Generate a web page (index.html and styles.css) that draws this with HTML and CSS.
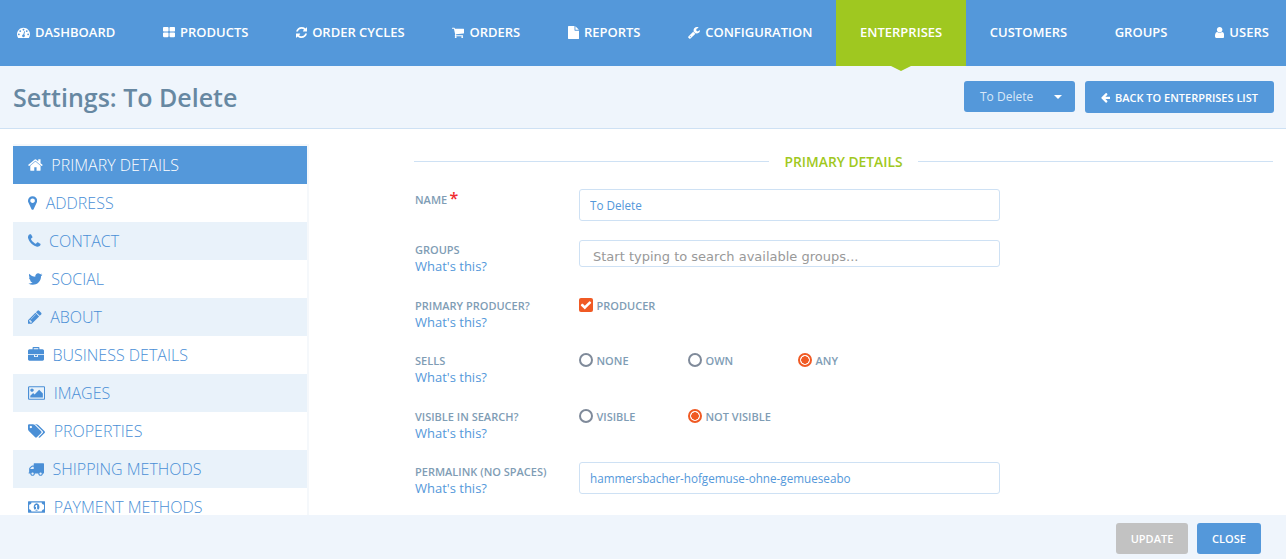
FILE: index.html
```html
<!DOCTYPE html>
<html lang="en">
<head>
    <meta charset="UTF-8">
    <meta name="viewport" content="width=device-width, initial-scale=1.0">
    <title>Settings: To Delete</title>
    <link rel="stylesheet" href="styles.css">
</head>
<body>
    <!-- Icon sprite, each icon sets its own viewBox so it keeps its natural width -->
    <svg class="sprite" xmlns="http://www.w3.org/2000/svg">
        <defs>
            <path id="i-dashboard" d="M384 1152q0-53-37.500-90.500t-90.500-37.500-90.500 37.500-37.500 90.500 37.500 90.500 90.500 37.500 90.500-37.500 37.500-90.500zm192-448q0-53-37.500-90.500t-90.500-37.500-90.500 37.500-37.500 90.500 37.500 90.500 90.500 37.500 90.500-37.500 37.500-90.500zm428 481l101-382q6-26-7.500-48.500t-38.500-29.500-48 6.500-30 39.500l-101 382q-60 5-107 43.500t-63 98.500q-20 77 20 146t117 89 146-20 89-117q16-60-6-117t-72-91zm660-33q0-53-37.500-90.500t-90.500-37.500-90.500 37.500-37.500 90.500 37.500 90.500 90.500 37.500 90.500-37.500 37.500-90.500zm-640-640q0-53-37.500-90.500t-90.500-37.500-90.500 37.500-37.500 90.500 37.500 90.500 90.500 37.500 90.500-37.500 37.500-90.500zm448 192q0-53-37.500-90.500t-90.500-37.500-90.500 37.500-37.500 90.500 37.500 90.500 90.500 37.500 90.500-37.500 37.500-90.500zm320 448q0 261-141 483-19 29-54 29h-1402q-35 0-54-29-141-221-141-483 0-182 71-348t191-286 286-191 348-71 348 71 286 191 191 286 71 348z"/>
            <path id="i-grid" d="M832 1024v384q0 52-38 90t-90 38h-512q-52 0-90-38t-38-90v-384q0-52 38-90t90-38h512q52 0 90 38t38 90zm0-768v384q0 52-38 90t-90 38h-512q-52 0-90-38t-38-90v-384q0-52 38-90t90-38h512q52 0 90 38t38 90zm896 768v384q0 52-38 90t-90 38h-512q-52 0-90-38t-38-90v-384q0-52 38-90t90-38h512q52 0 90 38t38 90zm0-768v384q0 52-38 90t-90 38h-512q-52 0-90-38t-38-90v-384q0-52 38-90t90-38h512q52 0 90 38t38 90z"/>
            <path id="i-refresh" d="M1639 1056q0 5-1 7-64 268-268 434.500t-478 166.500q-146 0-282.500-55t-243.500-157l-129 129q-19 19-45 19t-45-19-19-45v-448q0-26 19-45t45-19h448q26 0 45 19t19 45-19 45l-137 137q71 66 161 102t187 36q134 0 250-65t186-179q11-17 53-117 8-23 30-23h192q13 0 22.500 9.500t9.500 22.500zm25-800v448q0 26-19 45t-45 19h-448q-26 0-45-19t-19-45 19-45l138-138q-148-137-349-137-134 0-250 65t-186 179q-11 17-53 117-8 23-30 23h-199q-13 0-22.500-9.500t-9.500-22.500v-7q65-268 270-434.500t480-166.500q146 0 284 55.500t245 156.500l130-129q19-19 45-19t45 19 19 45z"/>
            <path id="i-cart" d="M704 1536q0 52-38 90t-90 38-90-38-38-90 38-90 90-38 90 38 38 90zm896 0q0 52-38 90t-90 38-90-38-38-90 38-90 90-38 90 38 38 90zm128-1088v512q0 24-16.500 42.500t-40.500 21.500l-1044 122q13 60 13 70 0 16-24 64h920q26 0 45 19t19 45-19 45-45 19h-1024q-26 0-45-19t-19-45q0-11 8-31.500t16-36 21.500-40 15.500-29.500l-177-823h-204q-26 0-45-19t-19-45 19-45 45-19h256q16 0 28.500 6.500t19.500 15.500 13 24.500 8 26 5.500 29.500 4.500 26h1201q26 0 45 19t19 45z"/>
            <path id="i-file" d="M1152 512v-472q22 14 36 28l408 408q14 14 28 36h-472zm-128 32q0 40 28 68t68 28h544v1056q0 40-28 68t-68 28h-1344q-40 0-68-28t-28-68v-1600q0-40 28-68t68-28h800v544z"/>
            <path id="i-wrench" d="M448 1472q0-26-19-45t-45-19-45 19-19 45 19 45 45 19 45-19 19-45zm644-420l-682 682q-37 37-90 37-52 0-91-37l-106-108q-38-36-38-90 0-53 38-91l681-681q39 98 114.500 173.500t173.500 114.500zm634-435q0 39-23 106-47 134-164.500 217.500t-258.500 83.500q-185 0-316.500-131.500t-131.500-316.500 131.500-316.500 316.500-131.500q58 0 121.500 16.500t107.500 46.500q16 11 16 28t-16 28l-293 169v224l193 107q5-3 79-48.500t135.500-81 70.500-35.500q15 0 23.500 10t8.500 25z"/>
            <path id="i-user" d="M1536 1399q0 109-62.500 187t-150.500 78h-854q-88 0-150.500-78t-62.500-187q0-85 8.500-160.500t31.500-152 58.500-131 94-89 134.500-34.500q131 128 313 128t313-128q76 0 134.500 34.500t94 89 58.500 131 31.500 152 8.500 160.500zm-256-887q0 159-112.500 271.500t-271.500 112.500-271.500-112.500-112.500-271.500 112.500-271.500 271.500-112.500 271.500 112.500 112.500 271.500z"/>
            <path id="i-arrow-left" d="M1664 896v128q0 53-32.500 90.500t-84.500 37.500h-704l293 294q38 36 38 90t-38 90l-75 76q-37 37-90 37-52 0-91-37l-651-652q-37-37-37-90 0-52 37-91l651-650q38-38 91-38 52 0 90 38l75 74q38 38 38 91t-38 91l-293 293h704q52 0 84.500 37.500t32.500 90.500z"/>
            <path id="i-home" d="M1472 992v480q0 26-19 45t-45 19h-384v-384h-256v384h-384q-26 0-45-19t-19-45v-480q0-1 .5-3t.5-3l575-474 575 474q1 2 1 6zm223-69l-62 74q-8 9-21 11h-3q-13 0-21-7l-692-577-692 577q-12 8-24 7-13-2-21-11l-62-74q-8-10-7-23.500t11-21.500l719-599q32-26 76-26t76 26l244 204v-195q0-14 9-23t23-9h192q14 0 23 9t9 23v408l219 182q10 8 11 21.500t-7 23.500z"/>
            <path id="i-marker" d="M1152 640q0-106-75-181t-181-75-181 75-75 181 75 181 181 75 181-75 75-181zm256 0q0 109-33 179l-364 774q-16 33-47.500 52t-67.500 19-67.500-19-46.500-52l-365-774q-33-70-33-179 0-212 150-362t362-150 362 150 150 362z"/>
            <path id="i-phone" d="M1600 1240q0 27-10 70.500t-21 68.500q-21 50-122 106-94 51-186 51-27 0-53-3.500t-57.500-12.500-47-14.500-55.500-20.500-49-18q-98-35-175-83-127-79-264-216t-216-264q-48-77-83-175-3-9-18-49t-20.500-55.500-14.500-47-12.500-57.500-3.500-53q0-92 51-186 56-101 106-122 25-11 68.500-21t70.500-10q14 0 21 3 18 6 53 76 11 19 30 54t35 63.500 31 53.500q3 4 17.500 25t21.500 35.500 7 28.500q0 20-28.500 50t-62 55-62 53-28.500 46q0 9 5 22.500t8.500 20.500 14 24 11.500 19q76 137 174 235t235 174q2 1 19 11.500t24 14 20.500 8.500 22.500 5q18 0 46-28.500t53-62 55-62 50-28.500q14 0 28.500 7t35.500 21.500 25 17.500q25 15 53.500 31t63.500 35 54 30q70 35 76 53 3 7 3 21z"/>
            <path id="i-twitter" d="M1684 408q-67 98-162 167 1 14 1 42 0 130-38 259.500t-115.500 248.500-184.500 210.500-258 146-323 54.500q-271 0-496-145 35 4 78 4 225 0 401-138-105-2-188-64.500t-114-159.500q33 5 61 5 43 0 85-11-112-23-185.500-111.500t-73.500-205.500v-4q68 38 146 41-66-44-105-115t-39-154q0-88 44-163 121 149 294.500 238.500t371.500 99.500q-8-38-8-74 0-134 94.500-228.500t228.500-94.500q140 0 236 102 109-21 205-78-37 115-142 178 92-10 184-50z"/>
            <path id="i-pencil" d="M491 1536l91-91-235-235-91 91v107h128v128h107zm523-928q0-22-22-22-10 0-17 7l-542 542q-7 7-7 17 0 22 22 22 10 0 17-7l542-542q7-7 7-17zm-54-192l416 416-832 832h-416v-416zm683 96q0 53-37 90l-166 166-416-416 166-165q36-38 90-38 53 0 91 38l235 234q37 39 37 91z"/>
            <path id="i-briefcase" d="M640 256h512v-128h-512v128zm1152 640v480q0 66-47 113t-113 47h-1472q-66 0-113-47t-47-113v-480h672v160q0 26 19 45t45 19h320q26 0 45-19t19-45v-160h672zm-768 0v128h-256v-128h256zm768-480v384h-1792v-384q0-66 47-113t113-47h352v-160q0-40 28-68t68-28h576q40 0 68 28t28 68v160h352q66 0 113 47t47 113z"/>
            <path id="i-picture" d="M576 576q0 80-56 136t-136 56-136-56-56-136 56-136 136-56 136 56 56 136zm1024 384v448h-1408v-192l320-320 160 160 512-512zm96-704h-1600q-13 0-22.500 9.500t-9.500 22.500v1216q0 13 9.500 22.500t22.500 9.500h1600q13 0 22.500-9.500t9.500-22.500v-1216q0-13-9.500-22.500t-22.500-9.500zm160 32v1216q0 66-47 113t-113 47h-1600q-66 0-113-47t-47-113v-1216q0-66 47-113t113-47h1600q66 0 113 47t47 113z"/>
            <path id="i-tags" d="M448 448q0-53-37.500-90.500t-90.500-37.500-90.500 37.500-37.500 90.500 37.500 90.500 90.500 37.500 90.500-37.500 37.500-90.500zm1067 576q0 53-37 90l-491 492q-39 37-91 37-53 0-90-37l-715-716q-38-37-64.500-101t-26.500-117v-416q0-52 38-90t90-38h416q53 0 117 26.500t102 64.500l715 714q37 39 37 91zm384 0q0 53-37 90l-491 492q-39 37-91 37-36 0-59-14t-53-45l470-470q37-37 37-90 0-52-37-91l-715-714q-38-38-102-64.500t-117-26.500h224q53 0 117 26.500t102 64.500l715 714q37 39 37 91z"/>
            <path id="i-truck" d="M640 1408q0-52-38-90t-90-38-90 38-38 90 38 90 90 38 90-38 38-90zm-384-512h384v-256h-158q-13 0-22 9l-195 195q-9 9-9 22v30zm1280 512q0-52-38-90t-90-38-90 38-38 90 38 90 90 38 90-38 38-90zm256-1088v1024q0 15-4 26.500t-13.500 18.500-16.500 11.500-23.500 6-22.500 2-25.500 0-22.500-.5q0 106-75 181t-181 75-181-75-75-181h-384q0 106-75 181t-181 75-181-75-75-181h-64q-3 0-22.500.5t-25.500 0-22.500-2-23.500-6-16.500-11.500-13.500-18.500-4-26.500q0-26 19-45t45-19v-320q0-8-.5-35t0-38 2.500-34.500 6.500-37 14-30.500 22.500-30l198-198q19-19 50.500-32t58.500-13h160v-192q0-26 19-45t45-19h1024q26 0 45 19t19 45z"/>
            <path id="i-money" d="M832 1216h384v-96h-128v-448h-114l-148 137 77 80q42-37 55-57h2v288h-128v96zm512-320q0 70-21 142t-59.500 134-101.500 101-138 39-138-39-101.500-101-59.500-134-21-142 21-142 59.500-134 101.500-101 138-39 138 39 101.500 101 59.500 134 21 142zm512 256v-512q-106 0-181-75t-75-181h-1152q0 106-75 181t-181 75v512q106 0 181 75t75 181h1152q0-106 75-181t181-75zm128-832v1152q0 26-19 45t-45 19h-1792q-26 0-45-19t-19-45v-1152q0-26 19-45t45-19h1792q26 0 45 19t19 45z"/>
            <path id="i-check" d="M1671 566q0 40-28 68l-724 724-136 136q-28 28-68 28t-68-28l-136-136-362-362q-28-28-28-68t28-68l136-136q28-28 68-28t68 28l294 295 656-657q28-28 68-28t68 28l136 136q28 28 28 68z"/>
        </defs>
    </svg>

    <nav class="top-nav">
        <a class="nav-item"><svg class="icon" viewBox="0 0 1792 1792"><use href="#i-dashboard"/></svg>Dashboard</a>
        <a class="nav-item"><svg class="icon" viewBox="64 0 1664 1792"><use href="#i-grid"/></svg>Products</a>
        <a class="nav-item"><svg class="icon" viewBox="128 0 1536 1792"><use href="#i-refresh"/></svg>Order Cycles</a>
        <a class="nav-item"><svg class="icon" viewBox="64 0 1664 1792"><use href="#i-cart"/></svg>Orders</a>
        <a class="nav-item"><svg class="icon" viewBox="128 0 1536 1792"><use href="#i-file"/></svg>Reports</a>
        <a class="nav-item"><svg class="icon" viewBox="64 0 1664 1792"><use href="#i-wrench"/></svg>Configuration</a>
        <a class="nav-item active">Enterprises</a>
        <a class="nav-item">Customers</a>
        <a class="nav-item">Groups</a>
        <a class="nav-item"><svg class="icon" viewBox="256 0 1280 1792"><use href="#i-user"/></svg>Users</a>
    </nav>

    <header class="page-header">
        <h1>Settings: To Delete</h1>
        <div class="page-actions">
            <a class="btn btn-select">To Delete<span class="caret"></span></a>
            <a class="btn btn-back"><svg class="icon" viewBox="128 0 1536 1792"><use href="#i-arrow-left"/></svg>Back to Enterprises List</a>
        </div>
    </header>

    <main class="content">
        <ul class="side-menu">
            <li class="selected"><svg class="icon" viewBox="64 0 1664 1792"><use href="#i-home"/></svg>Primary Details</li>
            <li><svg class="icon" viewBox="384 0 1024 1792"><use href="#i-marker"/></svg>Address</li>
            <li><svg class="icon" viewBox="192 0 1408 1792"><use href="#i-phone"/></svg>Contact</li>
            <li><svg class="icon" viewBox="64 0 1664 1792"><use href="#i-twitter"/></svg>Social</li>
            <li><svg class="icon" viewBox="128 0 1536 1792"><use href="#i-pencil"/></svg>About</li>
            <li><svg class="icon" viewBox="0 0 1792 1792"><use href="#i-briefcase"/></svg>Business Details</li>
            <li><svg class="icon" viewBox="-64 0 1920 1792"><use href="#i-picture"/></svg>Images</li>
            <li><svg class="icon" viewBox="0 0 1920 1792"><use href="#i-tags"/></svg>Properties</li>
            <li><svg class="icon" viewBox="0 0 1792 1792"><use href="#i-truck"/></svg>Shipping Methods</li>
            <li><svg class="icon" viewBox="64 0 1920 1792"><use href="#i-money"/></svg>Payment Methods</li>
        </ul>

        <section class="details">
            <div class="legend"><span>Primary Details</span></div>
            <form class="form-grid">
                <div class="field-label"><label>Name</label> <span class="required">*</span></div>
                <div><input class="text-input" type="text" value="To Delete"></div>

                <div class="field-label"><label>Groups</label><a class="help">What's this?</a></div>
                <div><input class="text-input search-input" type="text" placeholder="Start typing to search available groups..."></div>

                <div class="field-label"><label>Primary Producer?</label><a class="help">What's this?</a></div>
                <div class="options">
                    <span class="option"><span class="checkbox"><svg class="icon" viewBox="0 0 1792 1792"><use href="#i-check"/></svg></span>Producer</span>
                </div>

                <div class="field-label"><label>Sells</label><a class="help">What's this?</a></div>
                <div class="options">
                    <span class="option"><span class="radio"></span>None</span>
                    <span class="option"><span class="radio"></span>Own</span>
                    <span class="option"><span class="radio checked"></span>Any</span>
                </div>

                <div class="field-label"><label>Visible in search?</label><a class="help">What's this?</a></div>
                <div class="options">
                    <span class="option"><span class="radio"></span>Visible</span>
                    <span class="option"><span class="radio checked"></span>Not Visible</span>
                </div>

                <div class="field-label"><label>Permalink (no spaces)</label><a class="help">What's this?</a></div>
                <div><input class="text-input" type="text" value="hammersbacher-hofgemuse-ohne-gemueseabo"></div>
            </form>
        </section>
    </main>

    <footer class="page-footer">
        <a class="btn btn-update">Update</a>
        <a class="btn btn-close">Close</a>
    </footer>
</body>
</html>
```

FILE: styles.css
```css
* {
    box-sizing: border-box;
}
body {
    font-family: 'Open Sans', sans-serif;
    background: #fff;
    color: #5498da;
    margin: 0;
    padding: 0;
    display: flex;
    flex-direction: column;
    height: 100vh;
    overflow: hidden;
}
.sprite {
    display: none;
}
.icon {
    height: 13px;
    fill: currentColor;
    flex-shrink: 0;
}

/* Top navigation */
.top-nav {
    display: flex;
    height: 66px;
    flex-shrink: 0;
    background: #5498da;
}
.nav-item {
    position: relative;
    display: flex;
    align-items: center;
    gap: 5px;
    padding: 0 23.8px 2px;
    color: #fff;
    font-size: 13px;
    font-weight: 600;
    text-transform: uppercase;
    white-space: nowrap;
}
.nav-item:first-child {
    padding-left: 17px;
}
.nav-item:last-child {
    padding-right: 17px;
}
.nav-item.active {
    background: #9fc820;
}
.nav-item.active::after {
    content: '';
    position: absolute;
    left: 50%;
    top: 100%;
    margin-left: -10px;
    border-style: solid;
    border-width: 5px 10px 0;
    border-color: #9fc820 transparent transparent;
}

/* Page header */
.page-header {
    display: flex;
    justify-content: space-between;
    align-items: center;
    height: 63px;
    flex-shrink: 0;
    padding: 0 12px 1px 13px;
    background: #eff5fc;
    border-bottom: 1px solid #cee1f4;
}
.page-header h1 {
    margin: 1px 0 0;
    font-size: 25px;
    font-weight: 600;
    color: #6788a2;
}
.page-actions {
    display: flex;
    align-items: flex-start;
    gap: 10px;
}
.btn {
    display: flex;
    align-items: center;
    height: 31px;
    border-radius: 3px;
    background: #5498da;
    color: #fff;
    font-size: 11px;
    font-weight: 600;
    text-transform: uppercase;
}
.btn-select {
    position: relative;
    width: 111px;
    padding-left: 16px;
    color: #d9e8f8;
    font-size: 12px;
    font-weight: 400;
    text-transform: none;
}
.caret {
    position: absolute;
    right: 13px;
    top: 14px;
    border-style: solid;
    border-width: 4px 4px 0;
    border-color: #fff transparent transparent;
}
.btn-back {
    width: 189px;
    height: 32px;
    padding: 1px 0 0 16px;
    gap: 4.5px;
}
.btn-back .icon {
    height: 11px;
}

/* Main area */
.content {
    flex: 1;
    min-height: 0;
    overflow: hidden;
    display: flex;
    padding: 15px 0 0 13px;
}
.side-menu {
    width: 296px;
    flex-shrink: 0;
    margin: 0;
    padding: 0;
    list-style: none;
    border-top: 2px solid #f5f8fb;
    border-right: 2px solid #f5f8fb;
    color: #4a8fd6;
    font-size: 16px;
    font-weight: 300;
    text-transform: uppercase;
}
.side-menu li {
    display: flex;
    align-items: center;
    height: 38px;
    padding-left: 15px;
    gap: 8.5px;
}
.side-menu li:nth-child(odd) {
    background: #e9f2fa;
}
.side-menu li.selected {
    background: #5498da;
    color: #fff;
}
.side-menu .icon {
    height: 16px;
}

/* Form */
.details {
    width: 859px;
    margin: 2px 0 0 105px;
}
.legend {
    display: flex;
    align-items: center;
    gap: 16px;
    height: 30px;
    margin-bottom: 13px;
    color: #9fc820;
    font-size: 13.8px;
    font-weight: 600;
    text-transform: uppercase;
}
.legend::before,
.legend::after {
    content: '';
    flex: 1;
    height: 1px;
    background: #cee1f4;
}
.form-grid {
    display: grid;
    grid-template-columns: 165px 421px;
    grid-template-rows: 51px 56px 55px 56px 55px 32px;
}
.field-label {
    padding: 1px 0 0 1px;
    line-height: 17px;
    font-size: 13px;
}
.field-label label {
    font-size: 11px;
    font-weight: 600;
    text-transform: uppercase;
    color: #7f9db5;
}
.required {
    margin-left: -1px;
    color: #f02b30;
    font-size: 16px;
    font-weight: 600;
    line-height: 1;
}
.help {
    display: block;
    color: #5498da;
}
.text-input {
    width: 100%;
    height: 32px;
    padding: 0 10px;
    border: 1px solid #cee1f4;
    border-radius: 3px;
    background: #fff;
    color: #5498da;
    font-family: 'Open Sans', sans-serif;
    font-size: 11.7px;
    outline: none;
}
.search-input {
    height: 27px;
    padding: 5px 13px 0;
    font-family: 'DejaVu Sans', sans-serif;
    font-size: 13px;
}
.search-input::placeholder {
    color: #999;
    opacity: 1;
}
.options {
    display: grid;
    grid-template-columns: 109px 110px 110px;
    align-items: start;
    padding-top: 2px;
}
.option {
    display: flex;
    align-items: center;
    gap: 3.5px;
    height: 14px;
    font-size: 11px;
    font-weight: 600;
    text-transform: uppercase;
    color: #7f9db5;
}
.checkbox {
    display: flex;
    align-items: center;
    justify-content: center;
    width: 14px;
    height: 14px;
    border-radius: 2px;
    background: #f05a24;
    color: #fff;
}
.checkbox .icon {
    height: 12px;
}
.radio {
    width: 14px;
    height: 14px;
    border: 2px solid #7f8a9a;
    border-radius: 50%;
}
.radio.checked {
    border-color: #f05a24;
    background: radial-gradient(circle, #f05a24 0 3.5px, #fff 4px);
}

/* Footer */
.page-footer {
    display: flex;
    justify-content: flex-end;
    gap: 9px;
    height: 44px;
    flex-shrink: 0;
    padding: 8px 25px 0 0;
    background: #eff5fc;
}
.btn-update,
.btn-close {
    justify-content: center;
    font-size: 11px;
}
.btn-update {
    width: 72px;
    background: #c2c2c2;
}
.btn-close {
    width: 64px;
}
```
